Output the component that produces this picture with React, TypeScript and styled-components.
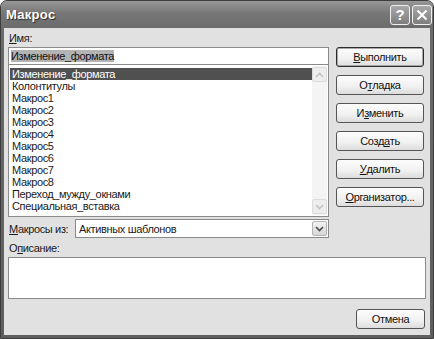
import styled, {createGlobalStyle} from "styled-components";

const GlobalStyle = createGlobalStyle`
  html, body {
    margin: 0;
    padding: 0;
    background: #ffffff;
  }
  * {
    box-sizing: border-box;
  }
`

const macros = [
    "Изменение_формата",
    "Колонтитулы",
    "Макрос1",
    "Макрос2",
    "Макрос3",
    "Макрос4",
    "Макрос5",
    "Макрос6",
    "Макрос7",
    "Макрос8",
    "Переход_мужду_окнами",
    "Специальная_вставка",
];

const Window = styled.div`
  width: 434px;
  height: 339px;
  background: linear-gradient(#8c8c8c, #6a6a6a 30px, #5e5e5e);
  border: 1px solid #3c3c3c;
  border-radius: 7px 7px 0 0;
  padding: 0 3px 3px;
  display: flex;
  flex-direction: column;
  font-family: "Liberation Sans", Arial, sans-serif;
  font-size: 11px;
  letter-spacing: -0.35px;
  color: #1a1a1a;
`
const TitleBar = styled.div`
  height: 27px;
  display: flex;
  align-items: center;
  padding: 0 1px 0 5px;
  background: linear-gradient(#979797, #777777 45%, #6b6b6b);
  margin: 0 -3px;
  border-radius: 6px 6px 0 0;
`
const Title = styled.div`
  flex: 1;
  color: #ffffff;
  font-weight: bold;
  font-size: 13px;
  letter-spacing: 0.3px;
  text-shadow: 1px 1px 1px #2a2a2a;
`
const CaptionButton = styled.div`
  width: 20px;
  height: 20px;
  margin-left: 2px;
  border: 1px solid #f0f0f0;
  border-radius: 3px;
  background: linear-gradient(#a8a8a8, #7e7e7e);
  display: flex;
  align-items: center;
  justify-content: center;
  color: #ffffff;
  font-size: 15px;
  font-weight: bold;
  letter-spacing: 0;
`
const Body = styled.div`
  flex: 1;
  background: #e1e1e1;
  padding: 4px 5px 5px 4px;
  display: flex;
  flex-direction: column;
`
const Top = styled.div`
  display: grid;
  grid-template-columns: 321px 88px;
  column-gap: 7px;
`
const LeftCol = styled.div`
  display: flex;
  flex-direction: column;
`
const Label = styled.div`
  height: 15px;
  line-height: 13px;
  padding-left: 1px;
`
const NameInput = styled.div`
  height: 18px;
  border: 1px solid #8a8a8a;
  background: #ffffff;
  padding: 1px 2px;
  line-height: 14px;
`
const Selected = styled.span`
  background: #b3b3b3;
  color: #111;
`
const ListBox = styled.div`
  height: 152px;
  border: 1px solid #8a8a8a;
  border-top: none;
  background: #ffffff;
  display: flex;
  padding: 1px;
`
const Items = styled.div`
  flex: 1;
  padding-top: 2px;
`
const Item = styled.div<{ $active?: boolean }>`
  height: 12px;
  line-height: 12px;
  padding-left: 2px;
  background: ${p => p.$active ? "#505050" : "transparent"};
  color: ${p => p.$active ? "#ffffff" : "#1a1a1a"};
`
const ScrollBar = styled.div`
  width: 15px;
  background: #f4f4f4;
  display: flex;
  flex-direction: column;
  justify-content: space-between;
  padding: 1px 0;
`
const ArrowBox = styled.div<{ $strong?: boolean }>`
  width: 15px;
  height: 15px;
  border: 1px solid ${p => p.$strong ? "#b4b4b4" : "#dcdcdc"};
  border-radius: 2px;
  background: ${p => p.$strong ? "linear-gradient(#f2f2f2, #d6d6d6)" : "#ededed"};
  display: flex;
  align-items: center;
  justify-content: center;
`
const SourceRow = styled.div`
  display: flex;
  align-items: center;
  margin-top: 2px;
  height: 19px;
`
const SourceLabel = styled.div`
  width: 67px;
  padding-left: 1px;
`
const Combo = styled.div`
  flex: 1;
  height: 19px;
  border: 1px solid #8a8a8a;
  background: #ffffff;
  display: flex;
  align-items: center;
  padding: 1px 1px 1px 3px;
`
const ComboText = styled.div`
  flex: 1;
`
const Buttons = styled.div`
  display: flex;
  flex-direction: column;
  gap: 8px;
  padding-top: 15px;
`
const Button = styled.div<{ $default?: boolean; $width?: number }>`
  height: 20px;
  width: ${p => p.$width ? `${p.$width}px` : "auto"};
  border: 1px solid ${p => p.$default ? "#2c2c2c" : "#555555"};
  border-radius: 3px;
  background: linear-gradient(#fdfdfd, #f0f0f0 60%, #dcdcdc);
  box-shadow: ${p => p.$default ? "inset 0 0 0 1px #a8a8a8" : "none"};
  display: flex;
  align-items: center;
  justify-content: center;
  color: #111;
`
const DescLabel = styled(Label)`
  margin-top: 4px;
`
const DescBox = styled.div`
  height: 42px;
  width: 418px;
  border: 1px solid #8a8a8a;
  background: #ffffff;
`
const Footer = styled.div`
  display: flex;
  justify-content: flex-end;
  margin-top: 10px;
`

function Chevron({up, color}: { up?: boolean; color: string }) {
    return (
        <svg width="9" height="6" viewBox="0 0 9 6">
            <path d={up ? "M1 5 L4.5 1.5 L8 5" : "M1 1 L4.5 4.5 L8 1"} fill="none" stroke={color}
                  strokeWidth="1.6"/>
        </svg>
    );
}

export default function App() {
    return (
        <>
            <GlobalStyle/>
            <Window>
                <TitleBar>
                    <Title>Макрос</Title>
                    <CaptionButton>?</CaptionButton>
                    <CaptionButton>
                        <svg width="12" height="12" viewBox="0 0 12 12">
                            <path d="M1.5 1.5 L10.5 10.5 M10.5 1.5 L1.5 10.5" stroke="#fff" strokeWidth="2"/>
                        </svg>
                    </CaptionButton>
                </TitleBar>
                <Body>
                    <Top>
                        <LeftCol>
                            <Label><u>И</u>мя:</Label>
                            <NameInput><Selected>Изменение_формата</Selected></NameInput>
                            <ListBox>
                                <Items>
                                    {macros.map((m, i) => (
                                        <Item key={m} $active={i === 0}>{m}</Item>
                                    ))}
                                </Items>
                                <ScrollBar>
                                    <ArrowBox><Chevron up color="#c4c4c4"/></ArrowBox>
                                    <ArrowBox><Chevron color="#c4c4c4"/></ArrowBox>
                                </ScrollBar>
                            </ListBox>
                            <SourceRow>
                                <SourceLabel><u>М</u>акросы из:</SourceLabel>
                                <Combo>
                                    <ComboText>Активных шаблонов</ComboText>
                                    <ArrowBox $strong><Chevron color="#4a4a4a"/></ArrowBox>
                                </Combo>
                            </SourceRow>
                        </LeftCol>
                        <Buttons>
                            <Button $default><u>В</u>ыполнить</Button>
                            <Button>О<u>т</u>ладка</Button>
                            <Button>И<u>з</u>менить</Button>
                            <Button>Созд<u>а</u>ть</Button>
                            <Button><u>У</u>далить</Button>
                            <Button><u>О</u>рганизатор...</Button>
                        </Buttons>
                    </Top>
                    <DescLabel>О<u>п</u>исание:</DescLabel>
                    <DescBox/>
                    <Footer>
                        <Button $width={69}>Отмена</Button>
                    </Footer>
                </Body>
            </Window>
        </>
    );
}
